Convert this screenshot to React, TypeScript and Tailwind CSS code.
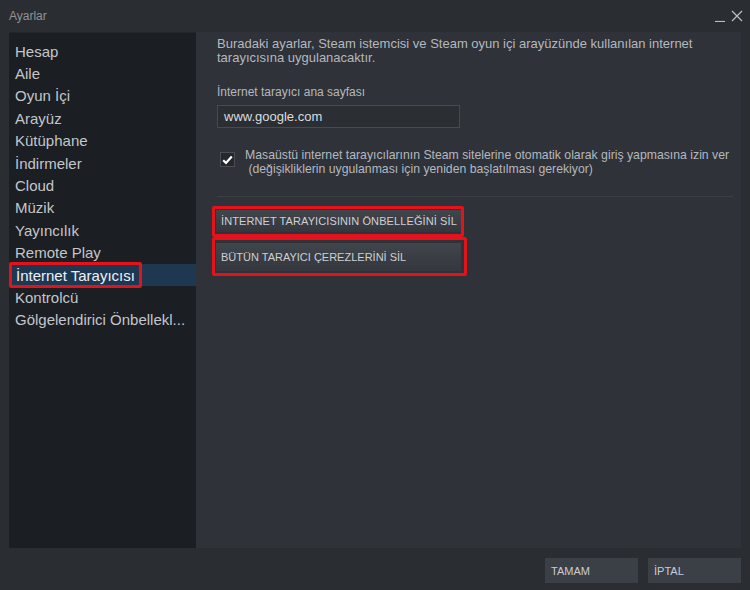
import React from "react";

const menu = [
  "Hesap",
  "Aile",
  "Oyun İçi",
  "Arayüz",
  "Kütüphane",
  "İndirmeler",
  "Cloud",
  "Müzik",
  "Yayıncılık",
  "Remote Play",
  "İnternet Tarayıcısı",
  "Kontrolcü",
  "Gölgelendirici Önbellekl...",
];

const selected = "İnternet Tarayıcısı";

export default function App() {
  return (
    <div
      className="w-[750px] h-[590px] bg-[#2a2d32] flex flex-col overflow-hidden"
      style={{ fontFamily: '"Liberation Sans", Arial, sans-serif' }}
    >
      {/* Title bar */}
      <div className="h-[32px] flex items-center justify-between pl-[9px] pr-[7px]">
        <span className="text-[12px] text-[#8f939a]">Ayarlar</span>
        <div className="flex items-end gap-[5px] text-[#b9bcc1]">
          <svg width="11" height="12" viewBox="0 0 11 12">
            <path d="M0 11.5 H10" stroke="currentColor" strokeWidth="1.2" />
          </svg>
          <svg width="12" height="12" viewBox="0 0 12 12">
            <path d="M1 1 L11 11 M11 1 L1 11" stroke="currentColor" strokeWidth="1.3" />
          </svg>
        </div>
      </div>

      {/* Body */}
      <div className="flex h-[516px] px-[9px]">
        {/* Sidebar */}
        <div className="w-[187px] bg-[#1b1e22] pt-[7px] border-t border-[#23262b]">
          {menu.map((item) => (
            <div
              key={item}
              className={
                "h-[22.4px] flex items-center text-[15px] leading-none " +
                (item === selected ? "bg-[#1f3851] text-[#eef1f4]" : "text-[#c3c6cb]")
              }
            >
              {item === selected ? (
                <span className="pl-[4px] pr-[4px] h-[26px] flex items-center border-[3px] border-[#e3121b] rounded-[2px]">
                  {item}
                </span>
              ) : (
                <span className="pl-[6px]">{item}</span>
              )}
            </div>
          ))}
        </div>

        {/* Content */}
        <div className="flex-1 bg-[#2f3238] pl-[21px] pr-[6px] pt-[5px] text-[12px] leading-[14px] text-[#b4b8bf]">
          <p className="w-[500px] text-[13px] leading-[14px]">
            Buradaki ayarlar, Steam istemcisi ve Steam oyun içi arayüzünde kullanılan internet
            <br />
            tarayıcısına uygulanacaktır.
          </p>

          <p className="mt-[20px]">İnternet tarayıcı ana sayfası</p>

          <div className="mt-[6px] w-[243px] h-[23px] bg-[#2b2e33] border border-[#474a51] flex items-center px-[6px] text-[13px] text-[#dadcdf]">
            www.google.com
          </div>

          <div className="mt-[20px] flex gap-[10px]">
            <div className="mt-[4px] ml-[3px] w-[15px] h-[15px] bg-[#24272b] border border-[#4a4d53] flex items-center justify-center shrink-0">
              <svg width="11" height="10" viewBox="0 0 11 10">
                <path d="M1.2 5.2 L4 8 L9.8 1.6" fill="none" stroke="#ffffff" strokeWidth="2.2" />
              </svg>
            </div>
            <p className="text-[12.25px] text-[#b4b8bf]">
              Masaüstü internet tarayıcılarının Steam sitelerine otomatik olarak giriş yapmasına izin ver
              <br />
              &nbsp;(değişikliklerin uygulanması için yeniden başlatılması gerekiyor)
            </p>
          </div>

          <div className="mt-[20px] h-px bg-[#3c3f46] mr-[2px]" />

          <div className="mt-[9px] -ml-[5px] w-[252px] h-[31px] border-[3px] border-[#e3121b] rounded-[2px] pl-[1px] pt-[1px]">
            <div className="h-[22px] w-[245px] bg-gradient-to-b from-[#41454c] to-[#34373d] flex items-center pl-[5px] text-[11px] text-[#cdd0d4] tracking-[0.1px]">
              İNTERNET TARAYICISININ ÖNBELLEĞİNİ SİL
            </div>
          </div>

          <div className="-ml-[5px] w-[255px] h-[39px] border-[3px] border-[#e3121b] rounded-[2px] pl-[1px] pt-[3px]">
            <div className="h-[28px] w-[245px] bg-gradient-to-b from-[#41454c] to-[#34373d] flex items-center pl-[5px] text-[11px] text-[#cdd0d4]">
              BÜTÜN TARAYICI ÇEREZLERİNİ SİL
            </div>
          </div>
        </div>
      </div>

      {/* Footer */}
      <div className="flex-1 flex justify-end items-start pt-[10px] pr-[9px] gap-[10px]">
        <button className="w-[93px] h-[25px] bg-[#3b3f46] text-left pl-[6px] pt-[2px] text-[11px] text-[#c9ccd0]">
          TAMAM
        </button>
        <button className="w-[93px] h-[25px] bg-[#3b3f46] text-left pl-[6px] pt-[2px] text-[11px] text-[#c9ccd0]">
          İPTAL
        </button>
      </div>
    </div>
  );
}
